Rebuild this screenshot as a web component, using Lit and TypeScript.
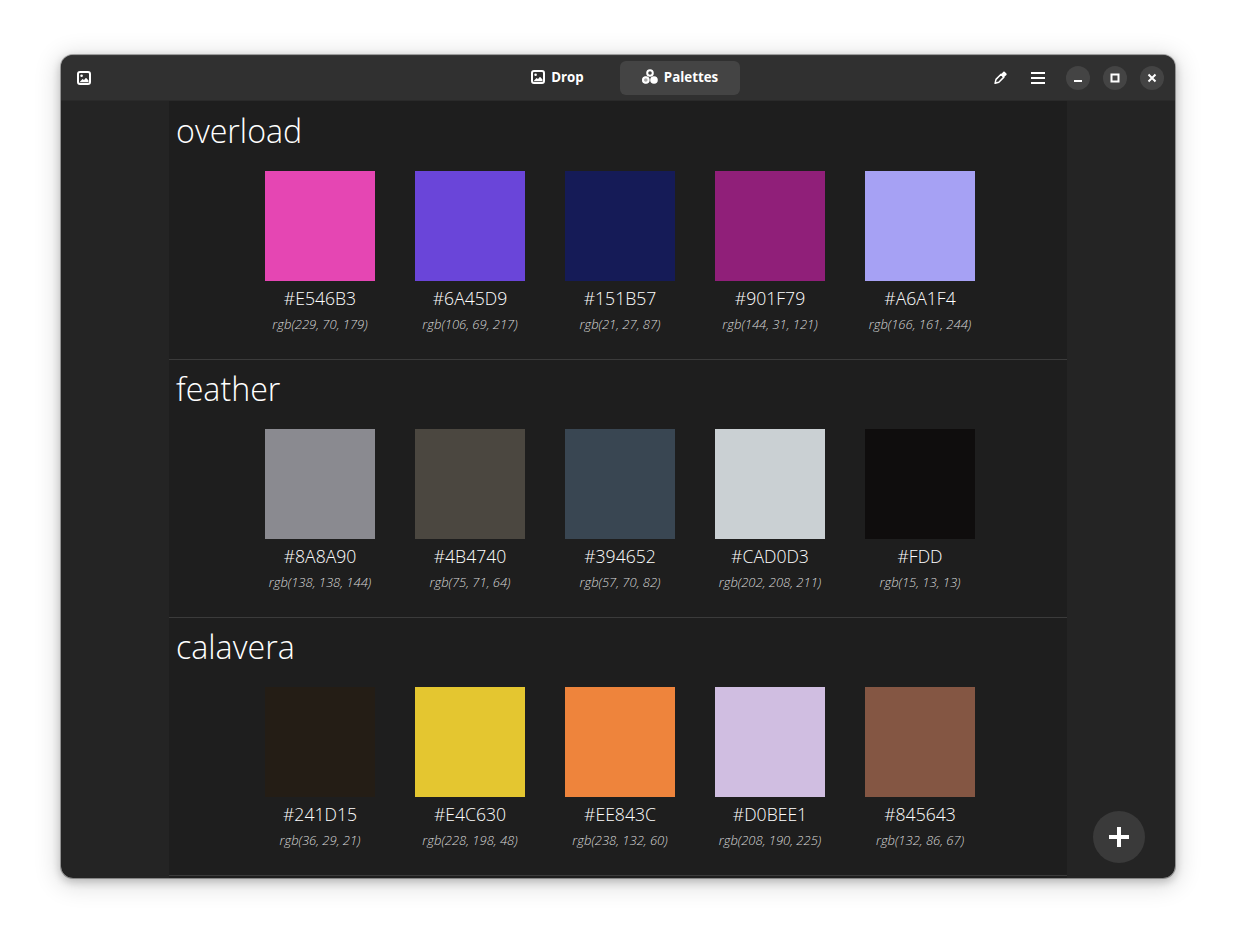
import { LitElement, html, css, svg } from "lit";
import { customElement } from "lit/decorators.js";

const palettes = [
  { name: "overload", colors: [["#E546B3", "rgb(229, 70, 179)"], ["#6A45D9", "rgb(106, 69, 217)"], ["#151B57", "rgb(21, 27, 87)"], ["#901F79", "rgb(144, 31, 121)"], ["#A6A1F4", "rgb(166, 161, 244)"]] },
  { name: "feather", colors: [["#8A8A90", "rgb(138, 138, 144)"], ["#4B4740", "rgb(75, 71, 64)"], ["#394652", "rgb(57, 70, 82)"], ["#CAD0D3", "rgb(202, 208, 211)"], ["#FDD", "rgb(15, 13, 13)", "#0f0d0d"]] },
  { name: "calavera", colors: [["#241D15", "rgb(36, 29, 21)"], ["#E4C630", "rgb(228, 198, 48)"], ["#EE843C", "rgb(238, 132, 60)"], ["#D0BEE1", "rgb(208, 190, 225)"], ["#845643", "rgb(132, 86, 67)"]] },
];

const imageIcon = svg`<svg class="ic" viewBox="0 0 16 16" width="16" height="16"><rect x="2" y="2" width="12" height="12" rx="2" fill="none" stroke="#fff" stroke-width="2"/><circle cx="5.6" cy="5.8" r="1.3" fill="#fff"/><path d="M3.5 12.2 L6.5 9 L8 10 L10 7.8 L12.5 10.5 V12.2 Z" fill="#fff"/></svg>`;
const paletteIcon = svg`<svg class="ic" viewBox="0 0 16 16" width="16" height="16"><circle cx="8" cy="4" r="2.8" fill="none" stroke="#fff" stroke-width="2"/><circle cx="3.8" cy="11" r="3.6" fill="#aaa"/><circle cx="3.8" cy="11" r="2.8" fill="none" stroke="#fff" stroke-width="2"/><circle cx="12" cy="11" r="3.8" fill="#fff"/></svg>`;
const pencilIcon = svg`<svg viewBox="0 0 16 16" width="15" height="15"><path d="M8.6 4.6 L11.6 7.6 L6.2 13 L2.2 14.2 L3.2 10 Z" fill="none" stroke="#fff" stroke-width="1.6" stroke-linejoin="round"/><path d="M8.2 5 L11 1.9 Q11.7 1.3 12.4 1.9 L14.3 3.8 Q14.9 4.5 14.3 5.2 L11.2 8 Z" fill="#fff"/></svg>`;
const menuIcon = svg`<svg viewBox="0 0 16 16" width="16" height="16"><path d="M1 2h14v2H1zM1 7h14v2H1zM1 12h14v2H1z" fill="#fff"/></svg>`;

@customElement("app-root")
export class AppRoot extends LitElement {
  static styles = css`
    :host { display: block; height: 945px; box-sizing: border-box; padding: 55px 61px 67px; background: #fff; font-family: "Open Sans", sans-serif; overflow: hidden; }
    .window { height: 823px; border-radius: 12px; background: #242424; overflow: hidden; display: flex; flex-direction: column; position: relative; }
    .frame { border-radius: 12px; box-shadow: 0 0 0 1px rgba(0,0,0,.3), 0 3px 9px 1px rgba(0,0,0,.2), 0 4px 24px 4px rgba(0,0,0,.14); }
    header { height: 46px; flex: none; background: #303030; display: grid; grid-template-columns: 1fr auto 1fr; align-items: center; padding: 0 11px 0 15px; box-shadow: inset 0 1px 0 rgba(255,255,255,.04); border-bottom: 1px solid #2a2a2a; box-sizing: border-box; }
    .left { display: flex; }
    .ic { display: block; }
    .tabs { display: flex; }
    .tab { width: 120px; height: 34px; border-radius: 6px; display: flex; align-items: center; justify-content: center; gap: 6px; color: #fff; font-size: 13.3px; font-weight: 700; box-sizing: border-box; padding-bottom: 1px; }
    .tab.on { background: #444; }
    .tab.drop { padding-right: 6px; gap: 5px; }
    .right { display: flex; justify-content: flex-end; align-items: center; }
    .tool { display: flex; margin-right: 22px; }
    .tool.pen { width: 16px; justify-content: center; }
    .tool.last { margin-right: 20px; }
    .wc { width: 24px; height: 24px; border-radius: 50%; background: #444; display: flex; align-items: center; justify-content: center; margin-left: 13px; }
    .wc.first { margin-left: 0; }
    main { flex: 1; min-height: 0; display: flex; justify-content: center; }
    .col { width: 898px; background: #1e1e1e; padding-top: 1px; }
    section { height: 258px; box-sizing: border-box; border-bottom: 1px solid #3b3b3b; padding: 0 7px; }
    h2 { margin: 0; padding-top: 7px; font-size: 32.2px; font-weight: 300; line-height: 43px; height: 60px; box-sizing: border-box; color: #fff; }
    .row { margin-top: 9px; display: flex; justify-content: center; gap: 40px; padding-left: 4px; }
    .sw { width: 110px; display: flex; flex-direction: column; align-items: center; }
    .box { width: 110px; height: 110px; }
    .hex { margin-top: 5px; font-size: 17.6px; font-weight: 300; line-height: 24px; color: #fff; white-space: nowrap; }
    .rgb { margin-top: 5px; font-size: 13px; font-weight: 300; font-style: italic; line-height: 18px; color: #d8d8d8; white-space: nowrap; }
    .fab { position: absolute; right: 30px; bottom: 15px; width: 52px; height: 52px; border-radius: 50%; background: #3a3a3a; display: flex; align-items: center; justify-content: center; }
  `;
  render() {
    return html`<div class="frame"><div class="window">
      <header>
        <div class="left">${imageIcon}</div>
        <div class="tabs">
          <div class="tab drop">${imageIcon}<span>Drop</span></div>
          <div class="tab on">${paletteIcon}<span>Palettes</span></div>
        </div>
        <div class="right">
          <div class="tool pen">${pencilIcon}</div>
          <div class="tool last">${menuIcon}</div>
          <div class="wc first"><svg viewBox="0 0 16 16" width="16" height="16"><rect x="4" y="10" width="8" height="2" fill="#fff"/></svg></div>
          <div class="wc"><svg viewBox="0 0 16 16" width="16" height="16"><rect x="4.5" y="4.5" width="7" height="7" fill="none" stroke="#fff" stroke-width="2"/></svg></div>
          <div class="wc"><svg viewBox="0 0 16 16" width="16" height="16"><path d="M4.5 4.5l7 7M11.5 4.5l-7 7" stroke="#fff" stroke-width="2"/></svg></div>
        </div>
      </header>
      <main><div class="col">
        ${palettes.map(p => html`<section>
          <h2>${p.name}</h2>
          <div class="row">
            ${p.colors.map(c => html`<div class="sw">
              <div class="box" style="background:${c[2] ?? c[0]}"></div>
              <div class="hex">${c[0]}</div>
              <div class="rgb">${c[1]}</div>
            </div>`)}
          </div>
        </section>`)}
      </div></main>
      <div class="fab"><svg viewBox="0 0 20 20" width="20" height="20"><path d="M8 0h4v8h8v4h-8v8H8v-8H0V8h8z" fill="#fff"/></svg></div>
    </div></div>`;
  }
}
